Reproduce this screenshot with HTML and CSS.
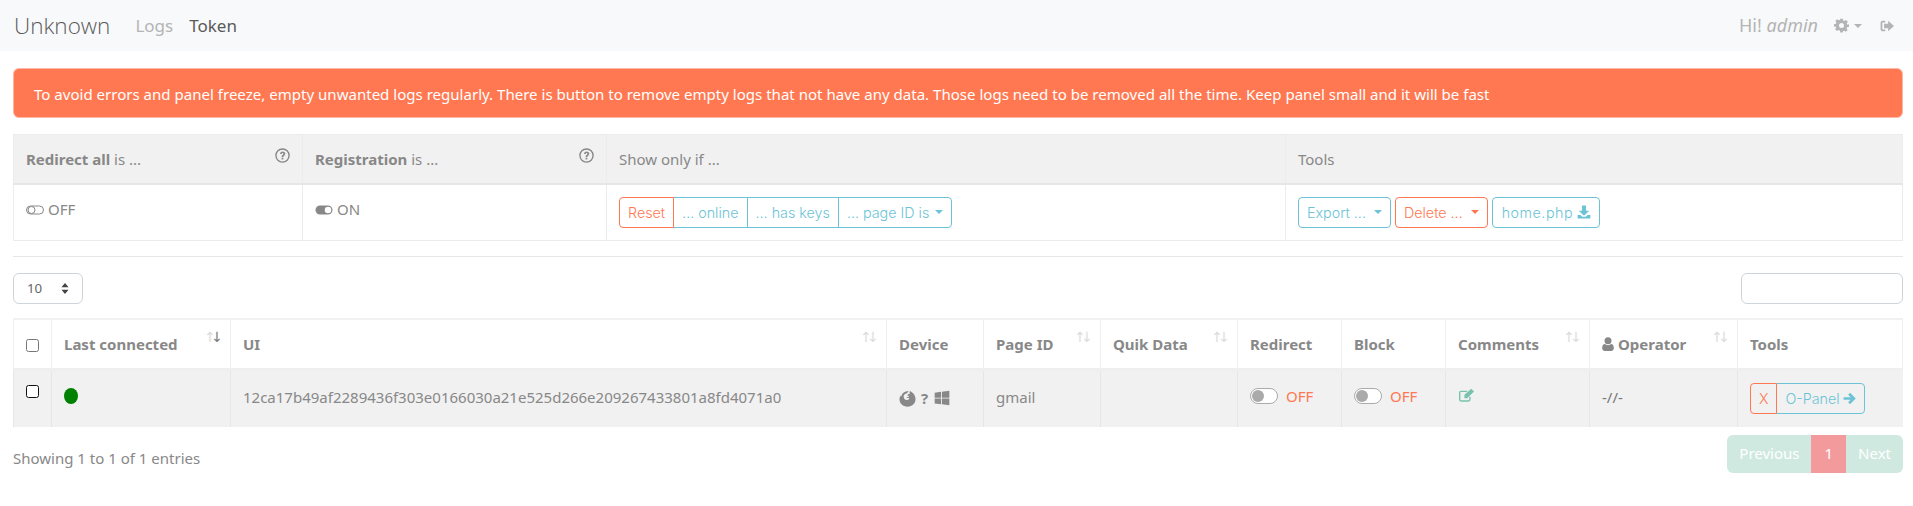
FILE: index.html
```html
<!DOCTYPE html>
<html lang="en">
<head>
<meta charset="utf-8">
<title>Unknown</title>
<link rel="stylesheet" href="styles.css">
</head>
<body>
<nav class="navbar">
  <span class="brand">Unknown</span>
  <a class="nav-link muted">Logs</a>
  <a class="nav-link">Token</a>
  <div class="nav-right">
    <span class="greet">Hi! <em>admin</em></span>
    <span class="nav-icon">
      <svg class="ic-gear" viewBox="0 0 24 24"><path d="M10 1h4l.7 3.1 1.9.8 2.7-1.7 2.8 2.8-1.7 2.7.8 1.9L24 10v4l-3.1.7-.8 1.9 1.7 2.7-2.8 2.8-2.7-1.7-1.9.8L14 23h-4l-.7-3.1-1.9-.8-2.7 1.7-2.8-2.8 1.7-2.7-.8-1.9L0 14v-4l3.1-.7.8-1.9-1.7-2.7 2.8-2.8 2.7 1.7 1.9-.8zM12 8a4 4 0 1 0 0 8 4 4 0 0 0 0-8z" fill-rule="evenodd"/></svg>
      <i class="caret"></i>
    </span>
    <svg class="ic-signout" viewBox="0 0 24 24"><path d="M9 3H4a3 3 0 0 0-3 3v12a3 3 0 0 0 3 3h5v-3H5a1 1 0 0 1-1-1V7a1 1 0 0 1 1-1h4z"/><path d="M14 3l10 9-10 9v-5H7V8h7z"/></svg>
  </div>
</nav>

<main class="page">
  <div class="alert">To avoid errors and panel freeze, empty unwanted logs regularly. There is button to remove empty logs that not have any data. Those logs need to be removed all the time. Keep panel small and it will be fast</div>

  <table class="panel">
    <colgroup><col class="p1"><col class="p2"><col class="p3"><col></colgroup>
    <thead>
      <tr>
        <th><div class="head-help"><span><b>Redirect all</b> is ...</span><svg class="ic-help" viewBox="0 0 24 24"><circle cx="12" cy="12" r="10.5" fill="none" stroke="currentColor" stroke-width="2.2"/><path d="M8 9.5C8 7 9.800 5.500 12.200 5.500S16.500 7 16.500 9.200c0 3-3.200 3-3.200 5.300h-2.800c0-3.500 3-3.500 3-5.200 0-.8-.6-1.300-1.400-1.300-.9 0-1.400.6-1.600 1.500z"/><rect x="10.500" y="15.500" width="2.800" height="2.800"/></svg></div></th>
        <th><div class="head-help"><span><b>Registration</b> is ...</span><svg class="ic-help" viewBox="0 0 24 24"><circle cx="12" cy="12" r="10.5" fill="none" stroke="currentColor" stroke-width="2.2"/><path d="M8 9.5C8 7 9.800 5.500 12.200 5.500S16.500 7 16.500 9.200c0 3-3.200 3-3.200 5.300h-2.800c0-3.500 3-3.500 3-5.200 0-.8-.6-1.300-1.400-1.300-.9 0-1.400.6-1.600 1.500z"/><rect x="10.500" y="15.500" width="2.800" height="2.800"/></svg></div></th>
        <th>Show only if ...</th>
        <th>Tools</th>
      </tr>
    </thead>
    <tbody>
      <tr>
        <td><span class="state"><svg class="ic-toggle" viewBox="0 0 36 20"><rect x="1" y="2" width="34" height="16" rx="8" fill="none" stroke="currentColor" stroke-width="2"/><circle cx="11" cy="10" r="7" fill="none" stroke="currentColor" stroke-width="2"/></svg>OFF</span></td>
        <td><span class="state"><svg class="ic-toggle" viewBox="0 0 36 20"><path fill-rule="evenodd" d="M10 1h16a9 9 0 0 1 0 18H10a9 9 0 0 1 0-18zm16 2.500a6.500 6.500 0 1 0 0 13 6.500 6.500 0 0 0 0-13z"/></svg>ON</span></td>
        <td>
          <div class="btn-group">
            <button class="btn danger">Reset</button><button class="btn info">... online</button><button class="btn info">... has keys</button><button class="btn info">... page ID is<i class="caret"></i></button>
          </div>
        </td>
        <td>
          <div class="tool-row">
            <button class="btn info solo">Export ...<i class="caret wide"></i></button>
            <button class="btn danger solo">Delete ...<i class="caret wide"></i></button>
            <button class="btn info solo roomy">home.php<svg class="ic-dl" viewBox="0 0 24 24"><path d="M8.500 1h7v9h5.500l-9 8.500L3 10h5.500z"/><path d="M1 17h5l3 3h6l3-3h5v6H1z"/></svg></button>
          </div>
        </td>
      </tr>
    </tbody>
  </table>

  <hr class="rule">

  <div class="controls">
    <div class="select">10<svg class="ic-updown" viewBox="0 0 10 14"><path d="M5 0l4.500 5.500h-9zM5 14L.5 8.500h9z"/></svg></div>
    <input class="search" type="text" aria-label="Search">
  </div>

  <table class="logs">
    <colgroup>
      <col class="c1"><col class="c2"><col class="c3"><col class="c4"><col class="c5"><col class="c6"><col class="c7"><col class="c8"><col class="c9"><col class="c10"><col>
    </colgroup>
    <thead>
      <tr>
        <th class="center"><span class="check"></span></th>
        <th class="sort active">Last connected</th>
        <th class="sort">UI</th>
        <th>Device</th>
        <th class="sort">Page ID</th>
        <th class="sort">Quik Data</th>
        <th>Redirect</th>
        <th>Block</th>
        <th class="sort">Comments</th>
        <th class="sort"><svg class="ic-user" viewBox="0 0 20 24"><circle cx="10" cy="6.500" r="6"/><path d="M4.500 12c1.500 1.300 3.300 2 5.500 2s4-.7 5.500-2c3 .3 4.500 2.800 4.500 7 0 3-1.800 5-4.500 5h-11C1.800 24 0 22 0 19c0-4.200 1.500-6.700 4.500-7z"/></svg>Operator</th>
        <th>Tools</th>
      </tr>
    </thead>
    <tbody>
      <tr>
        <td class="center top"><span class="check dark"></span></td>
        <td class="dot-cell"><span class="dot"></span></td>
        <td class="raised">12ca17b49af2289436f303e0166030a21e525d266e209267433801a8fd4071a0</td>
        <td>
          <span class="devices">
            <svg class="ic-ff" viewBox="0 0 24 24"><path fill-rule="evenodd" d="M15.500 1.500c-.8 1.200-.8 2.600-.2 3.900-1.800.1-3.200.9-3.600 2.300 1 0 1.900.4 2.500 1.100-.7 1.100-2 1.500-3.500 1.300 0 1.400 2 1.700 3.700.9.400 1.500-.8 2.900-3 3.100-2.400.2-4.400-1.200-4.800-3.700C6 8 8 5.200 11.500 4.700c.3-1.300 1.300-2.300 2.500-3C7.500 1 3.500 5 3.300 9.300c-.4-.5-.6-1.200-.6-2C1.400 9 .7 11 .7 13c0 5.800 5 10.500 11.300 10.500S23.300 18.800 23.300 13c0-5-3.200-9.400-7.800-11.500z"/></svg>
            <span class="unknown">?</span>
            <svg class="ic-win" viewBox="0 0 24 24"><path d="M1 4l9.500-1.300v8.800H1zM11.800 2.500L23 1v10.500H11.800zM1 12.800h9.500v8.700L1 20.200zM11.800 12.800H23V23l-11.200-1.500z"/></svg>
          </span>
        </td>
        <td class="raised">gmail</td>
        <td></td>
        <td class="raised"><span class="switch-wrap"><span class="switch"></span><span class="off">OFF</span></span></td>
        <td class="raised"><span class="switch-wrap"><span class="switch"></span><span class="off">OFF</span></span></td>
        <td class="top-comment"><svg class="ic-edit" viewBox="0 0 24 22"><path d="M17 13v4a2 2 0 0 1-2 2H4a2 2 0 0 1-2-2V7a2 2 0 0 1 2-2h9" fill="none" stroke="currentColor" stroke-width="2"/><path d="M9 10L19 1l4 4-10 10H9z"/></svg></td>
        <td class="slashes raised">-//-</td>
        <td>
          <div class="btn-group">
            <button class="btn danger">X</button><button class="btn info">O-Panel<svg class="ic-arrow" viewBox="0 0 24 24"><path d="M13 1.500L23.500 12 13 22.500l-3.500-3.500 4.500-4.500H1v-5h13L9.500 5z"/></svg></button>
          </div>
        </td>
      </tr>
    </tbody>
  </table>

  <div class="footer">
    <span class="info-text">Showing 1 to 1 of 1 entries</span>
    <div class="pager"><span class="pg">Previous</span><span class="pg current">1</span><span class="pg">Next</span></div>
  </div>
</main>
</body>
</html>
```

FILE: styles.css
```css
* { box-sizing: border-box; }
html, body { margin: 0; padding: 0; }
body {
  background: #fff;
  color: #888;
  font-family: "Noto Sans", "Open Sans", sans-serif;
  font-size: 15px;
  line-height: 1.5;
  overflow: hidden;
}
svg { fill: currentColor; display: inline-block; flex: none; }

/* navbar */
.navbar {
  height: 51px;
  background: #f8f9fa;
  display: flex;
  align-items: center;
  padding: 0 14px;
}
.brand { font-size: 22.5px; color: #5a5a5a; margin-right: 25px; font-weight: 300; font-family: "Open Sans", sans-serif; }
.nav-link { font-size: 17px; color: #5a5a5a; margin-right: 16px; }
.nav-link.muted { color: #b4b4b4; }
.nav-right { margin-left: auto; display: flex; align-items: center; color: #b4b4b4; padding-right: 5px; }
.greet { font-size: 18px; }
.greet em { font-style: italic; }
.nav-icon { display: flex; align-items: center; margin-left: 16px; gap: 5px; }
.ic-gear { width: 15px; height: 15px; }
.ic-signout { width: 14px; height: 14px; margin-left: 18px; }
.caret {
  display: inline-block;
  width: 0; height: 0;
  border-left: 4px solid transparent;
  border-right: 4px solid transparent;
  border-top: 4.500px solid currentColor;
  margin-left: 6px;
  vertical-align: 2px;
}
.nav-icon .caret { margin-left: 0; }
.caret.wide { margin-left: 8px; }

/* page */
.page { padding: 17px 10px 0 13px; }
.alert {
  height: 50px;
  background: #ff7851;
  border: 1px solid #ffb8a4;
  border-radius: 6px;
  color: #fff;
  padding: 3px 20px 0;
  display: flex;
  align-items: center;
  font-size: 15.060px;
  margin-bottom: 16px;
}

/* tables */
table { border-collapse: collapse; table-layout: fixed; width: 100%; }

.panel { border: 1px solid #ececec; }
.panel .p1 { width: 289px; }
.panel .p2 { width: 304px; }
.panel .p3 { width: 679px; }
.panel th, .panel td { border: 1px solid #ececec; padding: 0 12px; text-align: left; font-weight: 400; }
.panel th { background: #f1f1f1; height: 49px; padding-top: 1px; border-bottom: 2px solid #e6e6e6; }
.panel td { height: 57px; }
.panel b { font-weight: 700; }
.head-help { display: flex; justify-content: space-between; }
.ic-help { width: 15px; height: 15px; margin: 0; }
.state { display: inline-flex; align-items: center; gap: 4px; position: relative; top: -2px; }
.ic-toggle { width: 18px; height: 14px; }

.btn {
  font-family: Inter, "Noto Sans", sans-serif;
  font-size: 14.300px;
  font-weight: 300;
  height: 31px;
  padding: 0 8px;
  background: transparent;
  border: 1px solid;
  border-radius: 4px;
  display: inline-flex;
  align-items: center;
  white-space: nowrap;
}
.btn.info { color: #6cc3d5; border-color: #6cc3d5; }
.btn.danger { color: #ff7851; border-color: #ff7851; }
.btn.roomy { padding: 0 8px 0 9px; letter-spacing: .5px; }
.btn-group { display: inline-flex; vertical-align: middle; }
.btn-group .btn { border-radius: 0; margin-left: -1px; }
.btn-group .btn:first-child { border-radius: 4px 0 0 4px; margin-left: 0; position: relative; z-index: 1; }
.btn-group .btn:last-child { border-radius: 0 4px 4px 0; }
.tool-row { display: flex; gap: 4px; }
.ic-dl { width: 14px; height: 14px; margin-left: 4px; }
.ic-arrow { width: 13px; height: 13px; margin-left: 3px; }

.rule { border: 0; border-top: 1px solid #e6e6e6; margin: 15px 0 16px; }

.controls { display: flex; justify-content: space-between; align-items: center; margin-bottom: 14px; }
.select {
  width: 70px; height: 31px;
  border: 1px solid #ced4da;
  border-radius: 6px;
  padding: 0 13px;
  display: flex; align-items: center; justify-content: space-between;
  font-size: 13.300px;
  color: #666;
}
.ic-updown { width: 8px; height: 11px; color: #444; }
.search { width: 162px; height: 31px; border: 1px solid #ced4da; border-radius: 6px; background: #fff; }

.logs { border: 1px solid #f1f1f1; border-top-width: 2px; }
.logs .c1 { width: 38px; }
.logs .c2 { width: 179px; }
.logs .c3 { width: 656px; }
.logs .c4 { width: 97px; }
.logs .c5 { width: 117px; }
.logs .c6 { width: 137px; }
.logs .c7 { width: 104px; }
.logs .c8 { width: 104px; }
.logs .c9 { width: 144px; }
.logs .c10 { width: 148px; }
.logs th, .logs td { padding: 0 12px; text-align: left; border-left: 1px solid #efefef; }
.logs th { height: 50px; font-weight: 700; border-bottom: 3px solid #efefef; position: relative; background: #fff; }
.logs td { height: 57px; background: #f1f1f1; border-left-color: #e6e6e6; }
.logs td.raised { padding-bottom: 2px; }
.logs .center { text-align: center; padding: 0; }
.logs td.top { vertical-align: top; padding-top: 8px; }
.logs .top-comment { vertical-align: top; padding-top: 15px; }
.logs .dot-cell { vertical-align: top; padding-top: 17px; }

.sort::before, .sort::after {
  position: absolute;
  top: 10px;
  font-family: "DejaVu Sans", sans-serif;
  font-size: 14px;
  line-height: 1;
  font-weight: 400;
  color: #dcdcdc;
}
.sort::before { content: "\2191"; right: 14px; }
.sort::after { content: "\2193"; right: 7px; }
.sort.active::after { color: #777; }

.check { display: inline-block; width: 13px; height: 13px; border: 1px solid #777; border-radius: 2.500px; background: #fff; vertical-align: middle; }
.check.dark { border-color: #111; }
.dot { display: block; width: 14px; height: 16px; border-radius: 50%; background: #008000; }

.devices { display: flex; align-items: center; gap: 5px; }
.ic-ff { width: 17px; height: 17px; }
.ic-win { width: 16px; height: 16px; margin-left: 1px; }
.unknown { font-weight: 700; font-size: 15px; line-height: 1; }

.switch-wrap { display: inline-flex; align-items: center; gap: 8px; }
.switch { display: inline-block; width: 28px; height: 16px; border: 1px solid #aaa; border-radius: 8px; background: #fff; position: relative; }
.switch::before { content: ""; position: absolute; left: 1px; top: 1px; width: 12px; height: 12px; border-radius: 50%; background: #aaa; }
.off { color: #ff7851; }
.ic-edit { width: 17px; height: 15px; color: #78c2ad; }
.slashes { color: #777; }
.ic-user { width: 12px; height: 14px; margin-right: 4px; vertical-align: -1px; }

.footer { display: flex; justify-content: space-between; align-items: center; margin-top: 8px; }
.info-text { color: #888; position: relative; top: 5px; }
.pager { display: flex; height: 38px; border-radius: 6px; overflow: hidden; }
.pg { background: #cfe9e1; color: #fff; display: flex; align-items: center; padding: 0 12px; }
.pg.current { background: #f39a9c; padding: 0 13px; }
```
